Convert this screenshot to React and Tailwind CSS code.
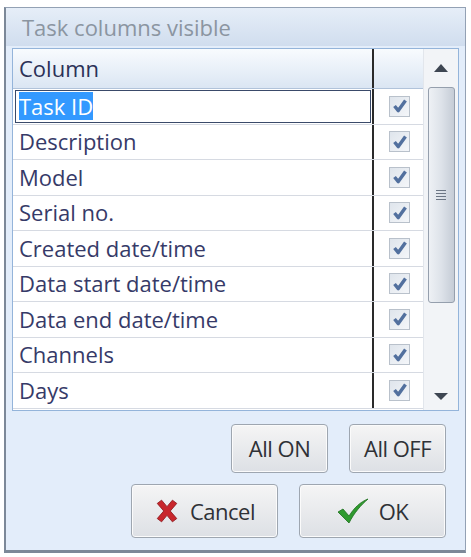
const rows = [
  "Task ID",
  "Description",
  "Model",
  "Serial no.",
  "Created date/time",
  "Data start date/time",
  "Data end date/time",
  "Channels",
  "Days",
];

function Check() {
  return (
    <div className="w-[21px] h-[21px] border border-[#b9c1cb] bg-gradient-to-br from-[#dfe5ec] to-[#f4f6f9] flex items-center justify-center">
      <svg width="16" height="16" viewBox="0 0 14 14">
        <path d="M2.2 7 L5.5 11 L11.8 2.2" fill="none" stroke="#52709e" strokeWidth="3" strokeLinejoin="round" />
      </svg>
    </div>
  );
}

function Btn({ children, className }) {
  return (
    <button
      className={
        "flex items-center justify-center gap-[10px] rounded-[4px] border border-[#9ea6b0] bg-gradient-to-b from-[#f5f5f5] to-[#dde0e5] text-[22px] tracking-[-0.5px] text-[#2f3136] shadow-[inset_0_0_0_1px_#fbfbfb] " +
        className
      }
    >
      {children}
    </button>
  );
}

export default function App() {
  return (
    <div className="w-[471px] h-[557px] bg-white pt-[7px] pl-[4px]" style={{ fontFamily: '"Open Sans", "Noto Sans", sans-serif' }}>
      <div className="w-[462px] h-[546px] border border-[#93a1b4] border-l-2 border-b-[3px] border-l-[#7c8898] border-b-[#7c8898] bg-[#e3edfa] flex flex-col">
        <div className="h-[38px] shrink-0 bg-gradient-to-b from-[#e6eef8] to-[#d0ddee] text-[#8b95a1] text-[22px] pl-[16px] flex items-center">
          Task columns visible
        </div>
        <div className="mx-[6px] mt-[2px] h-[363px] border border-[#94b4da] bg-white flex">
          <div className="flex-1 flex flex-col">
            <div className="h-[40px] shrink-0 flex bg-gradient-to-b from-[#f8fbfe] to-[#dbe6f3] border-b border-[#b1c3da]">
              <div className="w-[361px] pl-[6px] flex items-end pb-[3px] text-[22px] text-[#2b3157] border-r-2 border-[#2a2a2a]">
                Column
              </div>
              <div className="flex-1"></div>
            </div>
            {rows.map((r, i) => (
              <div key={r} className="h-[35.5px] shrink-0 flex border-b border-[#d6dae2]">
                <div className="w-[361px] pl-[2px] pr-[1px] py-[1px] border-r-2 border-[#2a2a2a] flex">
                  {i === 0 ? (
                    <div className="flex-1 border border-[#3a4a6a] flex items-center pl-[3px] text-[22px]">
                      <span className="bg-[#3399ff] text-white leading-[28px]">Task ID</span>
                    </div>
                  ) : (
                    <div className="flex-1 flex items-center pl-[4px] text-[22px] text-[#363a68]">{r}</div>
                  )}
                </div>
                <div className="flex-1 flex items-center justify-center pl-[2px]">
                  <Check />
                </div>
              </div>
            ))}
          </div>
          <div className="w-[35px] bg-[#f2f4f7] border-l border-[#e2e6ec] flex flex-col items-center">
            <div className="h-[38px] flex items-center justify-center">
              <svg width="14" height="8" viewBox="0 0 14 8">
                <path d="M0 8 L7 0 L14 8 Z" fill="#3e4652" />
              </svg>
            </div>
            <div className="w-[27px] h-[216px] rounded-[3px] border border-[#959fad] bg-gradient-to-r from-[#eef1f5] via-[#dde2e9] to-[#c5ccd6] flex items-center justify-center">
              <div className="flex flex-col gap-[2px]">
                <div className="w-[10px] h-[1px] bg-[#6c7684]"></div>
                <div className="w-[10px] h-[1px] bg-[#6c7684]"></div>
                <div className="w-[10px] h-[1px] bg-[#6c7684]"></div>
                <div className="w-[10px] h-[1px] bg-[#6c7684]"></div>
              </div>
            </div>
            <div className="flex-1 flex items-end pb-[10px]">
              <svg width="14" height="7" viewBox="0 0 14 7">
                <path d="M0 0 L7 7 L14 0 Z" fill="#3e4652" />
              </svg>
            </div>
          </div>
        </div>
        <div className="flex justify-end gap-[21px] pr-[19px] mt-[13px]">
          <Btn className="w-[97px] h-[49px]">All ON</Btn>
          <Btn className="w-[97px] h-[49px]">All OFF</Btn>
        </div>
        <div className="flex justify-end gap-[21px] pr-[19px] mt-[11px]">
          <Btn className="w-[147px] h-[54px]">
            <svg width="26" height="26" viewBox="0 0 24 24">
              <path d="M3 5 L7 2 L12 8 L17 2 L21 5 L15 12 L21 19 L17 22 L12 16 L7 22 L3 19 L9 12 Z" fill="#c8262c" stroke="#8e1a1f" strokeWidth="0.8" strokeLinejoin="round" />
            </svg>
            <span>Cancel</span>
          </Btn>
          <Btn className="w-[147px] h-[54px]">
            <svg width="32" height="26" viewBox="0 0 32 26">
              <path d="M1 14 L6 11 L12 18 C17 10 23 4 31 1 C24 7 17 15 12 25 Z" fill="#2f9a2f" stroke="#1d6e1d" strokeWidth="0.8" strokeLinejoin="round" />
            </svg>
            <span>OK</span>
          </Btn>
        </div>
      </div>
    </div>
  );
}
